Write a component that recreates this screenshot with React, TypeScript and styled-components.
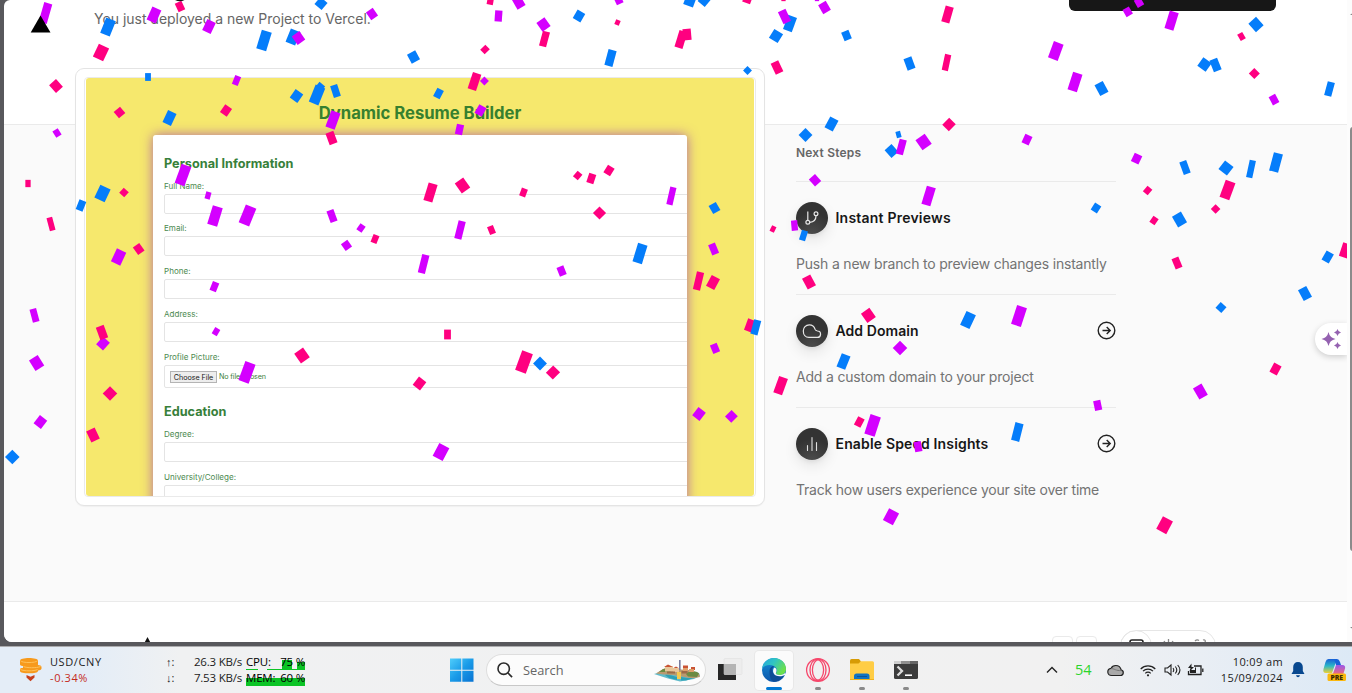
import React from "react";
import styled, { createGlobalStyle } from "styled-components";

const GlobalStyle = createGlobalStyle`
  * { box-sizing: border-box; }
  html, body { margin: 0; padding: 0; }
  body { width: 1352px; height: 693px; overflow: hidden; }
`;

const sans = `Inter, "Liberation Sans", sans-serif`;
const system = `"Open Sans", "Noto Sans", sans-serif`;

const Screen = styled.div`
  width: 1352px;
  height: 693px;
  display: flex;
  flex-direction: column;
  background: #58585c;
  overflow: hidden;
`;

/* ---------- browser window ---------- */

const Window = styled.div`
  height: 642px;
  margin-left: 4px;
  display: flex;
  border-radius: 6px 0 0 8px;
  overflow: hidden;
  background: #fff;
  flex: none;
`;

const Page = styled.main`
  position: relative;
  width: 1343px;
  height: 642px;
  overflow: hidden;
  display: flex;
  flex-direction: column;
  font-family: ${sans};
`;

const ScrollTrack = styled.div`
  width: 5px;
  padding-left: 3px;
  background: #fcfcfc;
  display: flex;
  flex-direction: column;
`;

const ScrollArrow = styled.div<{ $top: number; $down?: boolean }>`
  margin-top: ${(p) => p.$top}px;
  width: 4px;
  height: 3px;
  background: #858585;
  clip-path: ${(p) => (p.$down ? "polygon(0 0, 100% 0, 100% 100%)" : "polygon(0 100%, 100% 0, 100% 100%)")};
`;

const Thumb = styled.div`
  margin-top: 112px;
  width: 6px;
  height: 424px;
  border-radius: 3px;
  background: #8b8b8b;
`;

const Hero = styled.header`
  height: 125px;
  flex: none;
  display: flex;
  justify-content: space-between;
  align-items: flex-start;
  border-bottom: 1px solid #eaeaea;
  padding: 0 71px 0 26px;
`;

const Intro = styled.div`
  display: flex;
  gap: 43px;
`;

const LogoSvg = styled.svg`
  position: relative;
  z-index: 3;
  margin-top: 15px;
  display: block;
`;

const Lead = styled.p`
  margin: 9px 0 0;
  height: 20px;
  line-height: 20px;
  font-size: 14px;
  letter-spacing: -0.03px;
  color: #666;
  white-space: nowrap;
`;

const DarkButton = styled.div`
  width: 207px;
  height: 11px;
  border-radius: 0 0 6px 6px;
  background: #171717;
`;

const Body = styled.section`
  height: 477px;
  flex: none;
  background: #fafafa;
  border-bottom: 1px solid #eaeaea;
  padding-left: 71px;
  display: flex;
  align-items: flex-start;
  gap: 31px;
`;

const Card = styled.div`
  width: 690px;
  height: 438px;
  margin-top: -57px;
  padding: 8px;
  border: 1px solid #e4e4e4;
  border-radius: 9px;
  background: #fff;
  box-shadow: 0 1px 1px rgba(0, 0, 0, 0.04);
`;

const Shot = styled.div`
  height: 420px;
  border: 1px solid #eaeaea;
  border-radius: 4px;
  padding: 0 1px;
  overflow: hidden;
`;

const ShotCanvas = styled.div`
  height: 418px;
  background: #f6e86d;
  border-radius: 3px;
  overflow: hidden;
  display: flex;
  flex-direction: column;
  align-items: center;
  color: #3d7f3c;
`;

const ShotTitle = styled.h1`
  margin: 25px 0 12px;
  line-height: 20px;
  font-size: 16.65px;
  font-weight: 700;
  color: #37802f;
  white-space: nowrap;
`;

const FormPanel = styled.div`
  width: 534px;
  height: 380px;
  flex: none;
  background: #fff;
  border-radius: 3px 3px 0 0;
  padding: 19px 0 0 11px;
  overflow: hidden;
`;

const Glow = styled.div`
  border-radius: 3px 3px 0 0;
  box-shadow: 0 0 12px rgba(150, 50, 190, 0.7);
`;

const GroupTitle = styled.h2<{ $gap?: number }>`
  margin: ${(p) => p.$gap ?? 0}px 0 6.6px;
  line-height: 20px;
  font-size: 12.7px;
  font-weight: 700;
  color: #37803a;
`;

const Label = styled.div`
  height: 13px;
  line-height: 11px;
  font-size: 8.05px;
  color: #4d8a50;
`;

const Input = styled.div<{ $file?: boolean }>`
  width: 540px;
  height: ${(p) => (p.$file ? 23 : 20)}px;
  margin-bottom: ${(p) => (p.$file ? 0 : 9.85)}px;
  border: 1px solid #e4e4e4;
  border-radius: 2px;
  display: flex;
  align-items: center;
  gap: 2px;
  padding: 1px 0 0 5px;
  font-size: 7.2px;
  letter-spacing: -0.15px;
`;

const ChooseFile = styled.span`
  width: 47px;
  height: 12px;
  border: 1px solid #b4b4b4;
  background: #ededed;
  color: #222;
  line-height: 11px;
  letter-spacing: -0.05px;
  text-align: center;
  white-space: nowrap;
`;

const Steps = styled.aside`
  width: 320px;
  padding-top: 18px;
`;

const StepsTitle = styled.div`
  height: 38px;
  line-height: 20px;
  font-size: 12px;
  font-weight: 600;
  color: #666;
  letter-spacing: 0.2px;
`;

const Step = styled.article`
  height: 113px;
  border-top: 1px solid #eaeaea;
  padding-top: 20px;
`;

const StepHead = styled.div`
  display: flex;
  align-items: center;
  height: 32px;
`;

const Disc = styled.div`
  width: 32px;
  height: 32px;
  border-radius: 50%;
  background: radial-gradient(circle at 50% 100%, #4c4c4c, #333 60%);
  box-shadow: 0 6px 14px rgba(0, 0, 0, 0.09), 0 2px 4px rgba(0, 0, 0, 0.06);
  display: flex;
  align-items: center;
  justify-content: center;
`;

const StepName = styled.div<{ $spacing: number }>`
  flex: 1;
  padding: 0 0 1px 7.5px;
  font-size: 14px;
  font-weight: 600;
  color: #171717;
  letter-spacing: ${(p) => p.$spacing}px;
  white-space: nowrap;
`;

const ArrowSvg = styled.svg`
  margin: 0 0.5px 0.5px 0;
`;

const StepText = styled.p<{ $spacing: number }>`
  margin: 20px 0 0;
  line-height: 20px;
  font-size: 14px;
  color: #737373;
  letter-spacing: ${(p) => p.$spacing}px;
  white-space: nowrap;
`;

const Footer = styled.footer`
  flex: 1;
  background: #fff;
  display: flex;
  align-items: flex-start;
  padding: 28px 0 0 139px;
`;

const FootTriangle = styled.svg`
  margin: 7px 899px 0 0;
`;

const FootBox = styled.div`
  width: 21px;
  height: 21px;
  margin: 6px 3px 0 0;
  border: 1px solid #eaeaea;
  border-radius: 4px;
`;

const ThemePill = styled.div`
  width: 96px;
  height: 32px;
  margin-left: 20px;
  border: 1px solid #e6e6e6;
  border-radius: 16px;
`;

const ConfettiLayer = styled.svg`
  position: absolute;
  inset: 0 auto auto -4px;
  z-index: 2;
  pointer-events: none;
`;

const Assist = styled.div`
  position: absolute;
  z-index: 4;
  right: 0;
  top: 323px;
  width: 32px;
  height: 32px;
  border-radius: 16px 0 0 16px;
  background: #fff;
  box-shadow: 0 2px 6px rgba(0, 0, 0, 0.18);
  padding: 6px 0 0 6px;
`;

/* ---------- taskbar ---------- */

const Taskbar = styled.footer`
  height: 47px;
  margin-top: 4px;
  border-top: 1px solid #acacae;
  background: linear-gradient(90deg, #e4edf7 0, #e4edf7 90px, #f0f1f2 180px, #f1f1f1 1060px, #e9eef4 1200px, #dce9f6 1352px);
  display: flex;
  align-items: center;
  font-family: ${system};
  font-size: 11px;
  color: #1c1c1c;
  flex: none;
`;

const Lines = styled.div<{ $w: number; $ml?: number; $align?: string; $size?: number; $ls?: number }>`
  width: ${(p) => p.$w}px;
  margin-left: ${(p) => p.$ml ?? 0}px;
  text-align: ${(p) => p.$align ?? "left"};
  font-size: ${(p) => p.$size ?? 11}px;
  letter-spacing: ${(p) => p.$ls ?? 0}px;
  line-height: 16px;
  white-space: nowrap;
  flex: none;
`;

const Pair = styled.div`
  letter-spacing: 0.6px;
`;

const Loss = styled.div`
  color: #c42b1c;
  letter-spacing: 0.6px;
`;

const Meter = styled.div<{ $bg: string }>`
  height: 16px;
  color: #000;
  background: ${(p) => p.$bg};
  display: flex;
  justify-content: space-between;
`;

const Cell = styled.div<{ $w: number; $ml?: number }>`
  width: ${(p) => p.$w}px;
  margin-left: ${(p) => p.$ml ?? 0}px;
  display: flex;
  flex: none;
`;

const SearchBox = styled.div`
  width: 220px;
  height: 32px;
  margin-left: 12px;
  border: 1px solid #dedede;
  border-bottom-color: #c8c8c8;
  border-radius: 16px;
  background: #fcfcfc;
  display: flex;
  align-items: center;
  padding: 0 4px 0 10px;
  flex: none;
`;

const SearchText = styled.span`
  flex: 1;
  margin-left: 10px;
  font-size: 12.8px;
  color: #666;
`;

const AppSlot = styled.div<{ $active?: boolean }>`
  width: 38px;
  height: 39px;
  margin-right: 6px;
  padding-top: 6px;
  border-radius: 4px;
  background: ${(p) => (p.$active ? "#fbfbfb" : "transparent")};
  box-shadow: ${(p) => (p.$active ? "0 0 0 1px #e8e8e8" : "none")};
  display: flex;
  flex-direction: column;
  align-items: center;
  justify-content: space-between;
  flex: none;
`;

const Dot = styled.div<{ $active?: boolean }>`
  width: ${(p) => (p.$active ? 16 : 6)}px;
  height: 3px;
  border-radius: 2px;
  background: ${(p) => (p.$active ? "#0078d4" : "#8a8a8a")};
`;

const Apps = styled.div`
  display: flex;
  margin-left: 5px;
`;

const Temp = styled.span`
  width: 18px;
  margin-left: 17px;
  font-size: 14.5px;
  line-height: 20px;
  color: #2bd52b;
`;

/* ---------- confetti: centre x, centre y, width, height, angle ---------- */

type Piece = [number, number, number, number, number];

const BLUE: Piece[] = [
  [108, 27, 10, 16, 22], [264, 40.5, 10, 19, 17], [293, 37, 10, 14, 22], [321, 3.5, 9, 9, 40],
  [148, 77, 5.5, 7.5, 0], [169.5, 118, 9, 13, 25], [296.5, 96, 9, 10, 35], [317, 95, 10, 18, 22],
  [320, 87, 7, 7, 40], [335.5, 91, 7, 12, -18], [102.5, 193.5, 11, 14, 25], [81, 205.5, 7, 10, 22],
  [579, 16, 8.5, 9.5, 30], [413.5, 57, 9, 10, -28], [610.5, 58, 8, 16, 15], [690, 0.5, 10, 11, 20],
  [704.5, 0, 9, 10, 40], [790, 23.5, 9, 15, 20], [776, 36, 10, 10, 32], [747.5, 70.5, 6, 6, 45],
  [438.5, 93.5, 7, 9, 28], [714.5, 208, 8, 9, -30], [846.5, 35.5, 7.5, 9, -22], [909.5, 63.5, 8, 12, -20],
  [831.5, 124, 9, 12, 28], [805.5, 135, 9.5, 9.5, 45], [898.5, 134.5, 4.5, 6, -15], [891.5, 151, 9, 10, -42],
  [803.5, 235.5, 6, 10, 17], [1101.5, 88.5, 9, 12, -28], [1256, 24.5, 10, 11, -42], [1204.5, 64.5, 10, 10, 36],
  [1215.5, 65, 8, 12, -22], [1329.5, 89, 7, 14, 15], [1185, 167.5, 7, 13, -20], [1226, 168, 10.5, 10.5, 38],
  [1251, 169, 6, 17.5, 12], [1276, 162.5, 9, 18.5, 15], [1096, 208, 7, 8, 32], [1179.5, 219.5, 10, 12, -30],
  [12.3, 457, 10, 10, 45], [640, 253.5, 9.5, 19, 17], [540, 363.5, 9.5, 9.5, 45], [968, 320, 10, 15, 25],
  [843.5, 361.5, 9, 14, 22], [1017.3, 432, 8, 18, 14], [1327.7, 257, 8, 10, 30], [1305, 293.5, 9, 12, -28],
  [1221, 307.5, 7.5, 7.5, 42], [755.8, 327.3, 7, 14.5, 15],
];

const PINK: Piece[] = [
  [101, 52.5, 11, 14, 25], [180, 6.5, 7, 9, -25], [56, 86, 9, 10, -42], [119.5, 112.5, 8, 8, -40],
  [226, 110.5, 8, 9, 35], [331.5, 138, 8, 12, -20], [28, 183.5, 5, 7, 0], [124, 192.5, 6.5, 6.5, 42],
  [51, 224, 5.5, 13, -15], [375, 239, 6, 8, 22], [490.5, 0, 6, 9, 10], [544.5, 39, 7, 15, 15],
  [617.5, 22.5, 4.5, 5, 22], [485, 49.5, 6, 7, 45], [681, 39.5, 8, 17, 17], [687, 34.5, 8, 11, -5],
  [747.5, -1, 8, 8, 20], [783.5, -1, 4, 4, 0], [777, 67.5, 8, 12, -25], [474.5, 81.5, 8.5, 17, 18],
  [430.5, 192.5, 9, 18, 17], [462.5, 185.5, 10, 12, -35], [523.5, 192.5, 6, 8, 20], [577.7, 175.5, 6, 7, 40],
  [591.3, 178.5, 7, 9.5, 18], [609, 170.5, 7.5, 8.5, 32], [599.5, 213, 9, 9, 45], [491.5, 230, 6, 8, -22],
  [773, 229, 4.5, 6, 25], [947.5, 14.5, 8, 16, 16], [946.5, 62.5, 6, 16, 12], [949, 124.5, 9, 9.5, 45],
  [1241.5, 36.5, 5.5, 7, -30], [1254.3, 73.5, 7.5, 7.5, 45], [1227.5, 190, 10, 18, 20], [1147.6, 190.5, 6, 7, 40],
  [1215.6, 209, 6.5, 6.5, 45], [1154, 220.5, 6, 7, 35], [138.7, 249, 7.5, 9, -35], [102, 332.5, 8, 13, -20],
  [302, 355.5, 10.5, 11.5, -35], [110, 393.5, 10, 10, 45], [93, 435, 9, 12, -25], [698.5, 281, 7, 18, 13],
  [713, 282.5, 9, 12, 28], [750, 325.5, 8, 12, 20], [447.5, 334.5, 6.5, 9.5, 0], [524, 362, 11, 20.5, 20],
  [553, 372.5, 9.5, 10, 45], [419.5, 383.5, 9, 10, 38], [809, 282, 9, 12, -28], [868.4, 315.3, 10, 11, -35],
  [780.6, 385.6, 9, 17, 20], [859.3, 422, 7, 9, 28], [1177, 263, 7, 11, -22], [1345.5, 250.5, 9, 14, 18],
  [1275.5, 369, 8, 10, 28], [1164.6, 525.2, 11, 14, 28],
];

const PURPLE: Piece[] = [
  [45.5, 13, 8, 20, 16], [154, 15, 9.5, 14, 24], [209, 26.5, 9, 12, 25], [298.5, 38, 9, 10, -35],
  [372, 14, 8, 9, -35], [236.5, 80.5, 6, 9, 22], [333, 120, 9.5, 17, 20], [57, 133, 6, 7, -32],
  [183, 175, 10, 20, 20], [208, 195.5, 5, 7, 15], [215, 216, 10, 19, 17], [247.5, 215.5, 11, 19, 22],
  [332, 216, 7, 12, -20], [361, 228, 6, 7, 35], [518.5, 2, 9, 12, -30], [498.5, 16, 7, 10.5, 4],
  [543.5, 24.5, 9.5, 10.5, -35], [618.5, 0, 7, 8, -25], [784.5, 16.5, 8, 13, -25], [484.4, 81, 6, 6, 45],
  [480.5, 110.5, 8, 9.5, 30], [459.5, 129.5, 7, 10, 12], [671.4, 196, 6, 17.5, 13], [460, 230, 7, 18, 14],
  [794.5, 225.5, 6, 10, -5], [817, -1, 4, 4, 0], [824.5, 7.5, 8.5, 10, -30], [901.3, 147, 7, 15, 15],
  [923.6, 142, 11, 12, -35], [1027, 139.6, 7.5, 9, 25], [815, 180.2, 8, 9, -42], [928.6, 196, 9, 18.5, 17],
  [1055.8, 51, 10, 17, 20], [1075, 82, 9.5, 18, 18], [1127.7, 11.8, 7, 8, -30], [1139, 2.5, 7, 8, -30],
  [1171.6, 20.6, 9, 18, 17], [1274, 99.6, 7, 9, -28], [1136.6, 158.6, 8, 9, 25], [118.6, 257, 10, 14, 25],
  [346.5, 245.3, 7.5, 8, -35], [214.4, 286.6, 6.5, 9, 22], [34.5, 315.4, 6.5, 13, -15], [36.6, 363, 10, 12, -32],
  [216, 331.6, 5.5, 7, 30], [247, 372.4, 10.5, 20, 20], [40.4, 422, 9, 10, 38], [423.6, 264, 7, 18.5, 14],
  [561.6, 271, 7, 9, -22], [713.6, 249, 7, 11, -22], [715, 348.4, 7, 9, -22], [699, 414, 9, 10, 38],
  [731.4, 416.4, 8.5, 9, 45], [441, 452, 11, 14, 28], [1019, 316, 10, 19.5, 18], [900, 348, 10, 10, 45],
  [1097.7, 405.4, 7, 9.5, -12], [872.6, 425.4, 10.5, 20, 18], [918, 446.6, 7, 10, -10], [891, 516.7, 11, 13, 28],
  [1200.4, 391.6, 9.5, 12.5, -30],
];

/* pieces that other pieces fall across */
const UNDER: Piece[] = [[103, 343.5, 9, 10, 42]];

const draw = (list: Piece[], fill: string) =>
  list.map(([x, y, w, h, a], i) => (
    <rect
      key={fill + i}
      x={x - w / 2 - 0.15}
      y={y - h / 2 - 0.15}
      width={w + 0.3}
      height={h + 0.3}
      fill={fill}
      transform={`rotate(${a} ${x} ${y})`}
    />
  ));

const Confetti = () => (
  <ConfettiLayer width="1352" height="642" viewBox="0 0 1352 642">
    {draw(UNDER, "#d400ff")}
    {draw(PINK, "#ff0080")}
    {draw(BLUE, "#057dfa")}
    {draw(PURPLE, "#d400ff")}
    <path d="M175 0h9.500q-4.500 2.500-9.500 0z" fill="#171717" />
  </ConfettiLayer>
);

const BranchIcon = () => (
  <svg width="16" height="16" viewBox="0 0 16 16" fill="none" stroke="#e8e8e8" strokeWidth="1.2">
    <path d="M3.800 1.500v9" />
    <circle cx="3.800" cy="12.300" r="1.900" />
    <circle cx="12" cy="3.800" r="1.900" />
    <path d="M12 5.700c0 4-2.300 6.400-6.300 6.600" />
  </svg>
);

const CloudIcon = () => (
  <svg width="20" height="16" viewBox="0 0 20 16" fill="none" stroke="#e8e8e8" strokeWidth="1.2">
    <path d="M6.800 14.400h8.400a3.200 3.200 0 0 0 .3-6.400c-1.300-.2-2-.5-2.400-1.600C12.300 3.700 10 1.900 7.300 1.900c-3.500 0-6 2.700-6 6.100 0 3.700 2.300 6.400 5.500 6.400z" />
  </svg>
);

const BarsIcon = () => (
  <svg width="14" height="16" viewBox="0 0 14 16" stroke="#e0e0e0" strokeWidth="1.100" strokeLinecap="round">
    <path d="M2.500 9.500v5M7 1.500v13M11.500 6.500v8" />
  </svg>
);

const GoIcon = () => (
  <ArrowSvg width="19" height="19" viewBox="0 0 19 19" fill="none" stroke="#222" strokeWidth="1.400">
    <circle cx="9.500" cy="9.500" r="8.300" />
    <path d="M5.500 9.500h7.500M9.700 6l3.500 3.500-3.500 3.500" />
  </ArrowSvg>
);

const STEPS = [
  { icon: <BranchIcon />, name: "Instant Previews", text: "Push a new branch to preview changes instantly", go: false, ns: 0.22, ts: -0.19 },
  { icon: <CloudIcon />, name: "Add Domain", text: "Add a custom domain to your project", go: true, ns: 0.06, ts: -0.19 },
  { icon: <BarsIcon />, name: "Enable Speed Insights", text: "Track how users experience your site over time", go: true, ns: 0.16, ts: -0.22 },
];

const Field = ({ label }: { label: string }) => (
  <>
    <Label>{label}</Label>
    <Input />
  </>
);

const CoinsIcon = () => (
  <svg width="24" height="26" viewBox="0 0 24 26">
    <g fill="#f79a1c">
      <path d="M1 3.500c0-1.500 4-2.500 9-2.500s9 1 9 2.500v4c0 1.500-4 2-9 2s-9-.5-9-2z" />
      <path d="M4 8h15c2 0 3.500.8 3.500 2v1.500c0 1.500-3 2.300-8 2.300S4 13 4 12z" />
      <path d="M1 12c0-1 4-1.500 8.500-1.500S19 11 19 12v2c0 1.500-4 2.300-9 2.300S1 15.500 1 14z" />
    </g>
    <g fill="none" stroke="#ffc25a" strokeWidth="1">
      <path d="M1.500 3.800c2 2.300 15 2.300 17 0M4.500 9.500c3 1.500 13 1.800 17 0M1.500 12.500c3 1.800 14 1.800 17 0" />
    </g>
    <path d="M7.500 18l4 1.800 4-1.800v2.500l-4 3.800-4-3.800z" fill="#c8401c" />
  </svg>
);

const WindowsIcon = () => (
  <svg width="24" height="24" viewBox="0 0 24 24">
    <defs>
      <linearGradient id="win" x1="0" y1="0" x2="1" y2="1">
        <stop offset="0" stopColor="#4fcdfb" />
        <stop offset="0.5" stopColor="#1a9be8" />
        <stop offset="1" stopColor="#0873d3" />
      </linearGradient>
    </defs>
    <path d="M0 .5h11.300v11.200H0zM12.300.5H23.500v11.200H12.300zM0 12.700h11.300v11H0zM12.300 12.700h11.200v11H12.300z" fill="url(#win)" />
  </svg>
);

const IslandArt = () => (
  <svg width="48" height="23" viewBox="0 0 48 23">
    <path d="M1 15l7-2 12-2h16l10 3 1 3-6 3-14 2.500-12-3z" fill="#61bccb" />
    <path d="M3 14.500c4-2.500 6-4 11-6l6 1 8 1 10 1 8 3 1 3.500-8 1.500-10-2-9-1.500-9-.5z" fill="#b99a70" />
    <path d="M6 13l4-3 5-1 3 4zM33 15c2-3 10-4 13-.5L44 18l-9-.5z" fill="#6b8b42" />
    <path d="M12 7.500l3-1.500 5 1.500v5h-8zM20 9h6v4h-6z" fill="#e8c69a" />
    <path d="M11 8l4-2.500 5 2.500zM20.500 9l2.500-1.500L25.500 9zM30 6.500h5V9h-5zM38 8h4v3h-4z" fill="#c95334" />
    <path d="M30 9h5v3h-5zM36 10h5v3h-5z" fill="#e0a06c" />
    <path d="M26 1h1.600v10H26z" fill="#777b9e" />
    <path d="M14 12.500h8v2h-8zM28.500 12h6v2.500h-6z" fill="#9c6a48" />
    <path d="M24 13h4v7h-4z" fill="#f4c84f" />
    <path d="M12 16c4-1 7 1 12 2v3l-8-2zM28 18c4 1 8 1 13 1l-8 2.500h-5z" fill="#2fa0b5" />
  </svg>
);

const EdgeIcon = () => (
  <svg width="26" height="26" viewBox="0 0 26 26">
    <defs>
      <linearGradient id="edgeTop" x1="0" y1="0" x2="1" y2="0.500">
        <stop offset="0" stopColor="#23a5e0" />
        <stop offset="0.500" stopColor="#31c5c2" />
        <stop offset="1" stopColor="#6be04c" />
      </linearGradient>
      <linearGradient id="edgeLow" x1="0" y1="0" x2="0" y2="1">
        <stop offset="0" stopColor="#168fd8" />
        <stop offset="1" stopColor="#0d56aa" />
      </linearGradient>
    </defs>
    <circle cx="13" cy="13" r="12" fill="url(#edgeLow)" />
    <path d="M1 12C2 5 7 1 13 1c7 0 12 5 12 11 0 4-3 6-6.500 6-3 0-4-1-3.500-2 1.500-2 1-5.500-2-7C9 7 3 8 1 12z" fill="url(#edgeTop)" />
    <path d="M8.500 14c0-3 2-5 4.500-5-2 2-2.500 5-.5 7.500 2.500 3 7 3.500 11 1-2.500 5-7 7.500-11 7-3-1.500-4-5-4-10.500z" fill="#0e4c96" />
    <path d="M13.500 10.500c2 .8 2.700 3 1.500 5-.7 1.200.5 2.500 3.500 2.500 2 0 4-.5 5.500-2l1 1.500c-5 3-11 2-12.500-1.500-.8-2-.5-4.500 1-5.500z" fill="#f8fbfd" />
  </svg>
);

const OperaIcon = () => (
  <svg width="26" height="26" viewBox="0 0 26 26" fill="none" stroke="#f6476b" strokeWidth="1.300">
    <circle cx="13" cy="13" r="11.400" />
    <ellipse cx="11.800" cy="13" rx="6.800" ry="10.600" />
    <ellipse cx="14.200" cy="13" rx="6.800" ry="10.600" />
  </svg>
);

const FolderIcon = () => (
  <svg width="26" height="26" viewBox="0 0 26 26">
    <path d="M1 3.500Q1 2 2.500 2H10l2 2.500V8H1z" fill="#d79b05" />
    <path d="M1 6.500h8.500L12 4.200h11.500q1.500 0 1.500 1.500V23H1z" fill="#ffcd45" />
    <path d="M5 23v-4q0-2.500 2.500-2.500h10.500q2.500 0 2.500 2.500v4z" fill="#1173c2" />
    <path d="M8 19.500h10" stroke="#0a549b" />
    <path d="M1 22.500h24" stroke="#f0b31f" />
  </svg>
);

const TerminalIcon = () => (
  <svg width="26" height="26" viewBox="0 0 26 26">
    <rect x="1" y="4" width="24" height="18" rx="1.500" fill="#3c3c3c" />
    <path d="M1 4h7v3H1z" fill="#cfcfcf" />
    <path d="M8 4h9v3H8z" fill="#909090" />
    <path d="M17 4h8v3h-8z" fill="#666" />
    <path d="M4.500 9.500L9 14l-4.500 4.500" fill="none" stroke="#ddd" strokeWidth="2.300" />
    <path d="M12 18.200h7" stroke="#fff" strokeWidth="1.600" />
  </svg>
);

const CopilotIcon = () => (
  <svg width="26" height="26" viewBox="0 0 26 26">
    <defs>
      <linearGradient id="copA" x1="0" y1="0" x2="0" y2="1">
        <stop offset="0" stopColor="#185fd6" />
        <stop offset="0.500" stopColor="#29b8c8" />
        <stop offset="1" stopColor="#f0d132" />
      </linearGradient>
      <linearGradient id="copB" x1="0" y1="0" x2="0" y2="1">
        <stop offset="0" stopColor="#9a58ea" />
        <stop offset="1" stopColor="#f56b72" />
      </linearGradient>
    </defs>
    <path d="M6.500 2H15l-5 14H4Q.500 16 1.500 12l2-7Q4.300 2 6.500 2z" fill="url(#copA)" />
    <path d="M12 2h3q2 0 3 3l1 3h-5z" fill="#1763d8" />
    <path d="M14 8h6.500q3.200 0 2.500 3.500L21 18H10.500z" fill="url(#copB)" />
    <rect x="5.500" y="16.500" width="18.500" height="7.500" rx="1.500" fill="#fbb80e" />
    <text x="14.700" y="22.900" textAnchor="middle" fontFamily="Open Sans" fontWeight="800" fontSize="6.800" fill="#3d2b00">PRE</text>
  </svg>
);

export default function App() {
  return (
    <Screen>
      <GlobalStyle />
      <Window>
        <Page>
          <Hero>
            <Intro>
              <LogoSvg width="21" height="19" viewBox="0 0 21 19">
                <path d="M10.500 0.500L20.500 17.500H.700z" fill="#000" />
              </LogoSvg>
              <Lead>You just deployed a new Project to Vercel.</Lead>
            </Intro>
            <DarkButton />
          </Hero>
          <Body>
            <Card>
              <Shot>
                <ShotCanvas>
                  <ShotTitle>Dynamic Resume Builder</ShotTitle>
                  <Glow>
                    <FormPanel>
                      <GroupTitle>Personal Information</GroupTitle>
                      <Field label="Full Name:" />
                      <Field label="Email:" />
                      <Field label="Phone:" />
                      <Field label="Address:" />
                      <Label>Profile Picture:</Label>
                      <Input $file>
                        <ChooseFile>Choose File</ChooseFile>
                        <span>No file chosen</span>
                      </Input>
                      <GroupTitle $gap={14.2}>Education</GroupTitle>
                      <Field label="Degree:" />
                      <Field label="University/College:" />
                    </FormPanel>
                  </Glow>
                </ShotCanvas>
              </Shot>
            </Card>
            <Steps>
              <StepsTitle>Next Steps</StepsTitle>
              {STEPS.map((s) => (
                <Step key={s.name}>
                  <StepHead>
                    <Disc>{s.icon}</Disc>
                    <StepName $spacing={s.ns}>{s.name}</StepName>
                    {s.go && <GoIcon />}
                  </StepHead>
                  <StepText $spacing={s.ts}>{s.text}</StepText>
                </Step>
              ))}
            </Steps>
          </Body>
          <Footer>
            <FootTriangle width="10" height="9" viewBox="0 0 10 9">
              <path d="M4.500 0L9 8.500H0z" fill="#111" />
            </FootTriangle>
            <FootBox />
            <FootBox />
            <ThemePill>
              <svg width="94" height="16" viewBox="0 0 94 16" fill="none" stroke="#222">
                <circle cx="15" cy="15" r="15.500" stroke="#e6e6e6" />
                <rect x="9" y="9" width="13" height="10" rx="2" strokeWidth="1.600" />
                <path d="M47.500 8v3M43 10l1 1.500M52 10l-1 1.500M74 10q2-2 4-.5M82 9q3-1 2 3" stroke="#888" strokeWidth="1.300" />
              </svg>
            </ThemePill>
          </Footer>
          <Confetti />
          <Assist>
            <svg width="22" height="21" viewBox="0 0 22 21" fill="#9461b0">
              <path d="M7.500 3q1.200 5.700 7 7-5.800 1.200-7 7-1.200-5.800-7-7 5.800-1.300 7-7zM16.500 0q.6 2.900 3.500 3.500-2.900.6-3.500 3.500-.6-2.900-3.500-3.500 2.900-.6 3.500-3.500zM16.500 13q.6 2.900 3.500 3.500-2.900.6-3.500 3.500-.6-2.900-3.500-3.500 2.900-.6 3.500-3.500z" />
            </svg>
          </Assist>
        </Page>
        <ScrollTrack>
          <ScrollArrow $top={12} />
          <Thumb />
          <ScrollArrow $top={76} $down />
        </ScrollTrack>
      </Window>

      <Taskbar>
        <Cell $w={24} $ml={19}><CoinsIcon /></Cell>
        <Lines $w={60} $ml={7}>
          <Pair>USD/CNY</Pair>
          <Loss>-0.34%</Loss>
        </Lines>
        <Lines $w={12} $ml={56}>
          <div>↑:</div>
          <div>↓:</div>
        </Lines>
        <Lines $w={64} $align="right" $size={11.500} $ls={-0.2}>
          <div>26.3 KB/s</div>
          <div>7.53 KB/s</div>
        </Lines>
        <Lines $w={59} $ml={4} $size={11.500} $ls={-0.2}>
          <Meter $bg="linear-gradient(#0bc425,#0bc425) 36px 6px / 10px 10px no-repeat, linear-gradient(#0bc425,#0bc425) 51px 8px / 8px 8px no-repeat, linear-gradient(#0bc425,#0bc425) 0 15px / 12px 1px no-repeat, linear-gradient(#0bc425,#0bc425) 21px 15px / 38px 1px no-repeat">
            <span>CPU:</span><span>75 %</span>
          </Meter>
          <Meter $bg="linear-gradient(transparent 8px, #0bc425 8px)">
            <span>MEM:</span><span>60 %</span>
          </Meter>
        </Lines>
        <Cell $w={24} $ml={145}><WindowsIcon /></Cell>
        <SearchBox>
          <svg width="16" height="16" viewBox="0 0 16 16" fill="none" stroke="#2a2a2a" strokeWidth="1.600">
            <circle cx="6.700" cy="6.700" r="5.700" />
            <path d="M10.800 10.800l4.300 4.300" />
          </svg>
          <SearchText>Search</SearchText>
          <IslandArt />
        </SearchBox>
        <Apps>
          <AppSlot>
            <svg width="26" height="26" viewBox="0 0 26 26">
              <rect x="1" y="7" width="18" height="16" fill="#262626" />
              <rect x="7" y="1.500" width="18" height="16" rx="1" fill="#ededed" stroke="#ddd" strokeWidth=".500" />
              <rect x="7" y="7" width="12" height="10.500" fill="#b4b4b4" />
            </svg>
          </AppSlot>
          <AppSlot $active><EdgeIcon /><Dot $active /></AppSlot>
          <AppSlot><OperaIcon /><Dot /></AppSlot>
          <AppSlot><FolderIcon /><Dot /></AppSlot>
          <AppSlot><TerminalIcon /><Dot /></AppSlot>
        </Apps>
        <Cell $w={12} $ml={115}>
          <svg width="12" height="8" viewBox="0 0 12 8" fill="none" stroke="#222" strokeWidth="1.400"><path d="M1 6.500l5-5 5 5" /></svg>
        </Cell>
        <Temp>54</Temp>
        <Cell $w={18} $ml={14}>
          <svg width="18" height="13" viewBox="0 0 18 13">
            <path d="M4.500 11.500h9a2.700 2.700 0 0 0 .8-5.300C13.600 3.300 11.300 1.500 8.800 1.500 6.500 1.500 4.800 2.600 4 4.400 2 4.600.800 6.200.800 8 .800 10 2.500 11.500 4.500 11.500z" fill="#a9a9a9" stroke="#222" strokeWidth="1.200" />
            <path d="M4 4.700c3-.5 5 2.500 10.500 1.800" fill="none" stroke="#777" />
          </svg>
        </Cell>
        <Cell $w={16} $ml={15}>
          <svg width="16" height="13" viewBox="0 0 16 13" fill="none" stroke="#222" strokeWidth="1.200">
            <path d="M.700 5a10.300 10.300 0 0 1 14.600 0M3 7.200a7 7 0 0 1 10 0M5.300 9.300a3.800 3.800 0 0 1 5.400 0" />
            <circle cx="8" cy="11.300" r="1.100" fill="#222" stroke="none" />
          </svg>
        </Cell>
        <Cell $w={18} $ml={8}>
          <svg width="18" height="14" viewBox="0 0 18 14" fill="none" stroke="#222" strokeWidth="1.100">
            <path d="M1 5h2.500L7 2v10L3.500 9H1zM9 5q1.500 2 0 4M11.300 3.500q3 3.500 0 7M13.700 2q4.500 5 0 10" />
          </svg>
        </Cell>
        <Cell $w={18} $ml={5}>
          <svg width="18" height="14" viewBox="0 0 18 14" fill="none" stroke="#222" strokeWidth="1.300">
            <path d="M7 3h7v8.500H1.500V8M15.800 5.500v3.500" />
            <path d="M3 10V7h5V4.500h1V10z" fill="#222" stroke="none" />
            <path d="M4.500.500L1 5h2.500L2.500 8.500 7 4H4.500z" fill="#222" stroke="none" />
          </svg>
        </Cell>
        <Lines $w={70} $ml={8} $align="right" $ls={0.38}>
          <div>10:09 am</div>
          <div>15/09/2024</div>
        </Lines>
        <Cell $w={14} $ml={8}>
          <svg width="14" height="16" viewBox="0 0 14 16" fill="#08488f">
            <path d="M7 0C4 0 2.200 2 2.200 5v4L.500 12h13l-1.700-3V5C11.800 2 10 0 7 0zM5 13.300h4q-.5 1.900-2 1.900t-2-1.900z" />
          </svg>
        </Cell>
        <Cell $w={26} $ml={17}><CopilotIcon /></Cell>
      </Taskbar>
    </Screen>
  );
}
